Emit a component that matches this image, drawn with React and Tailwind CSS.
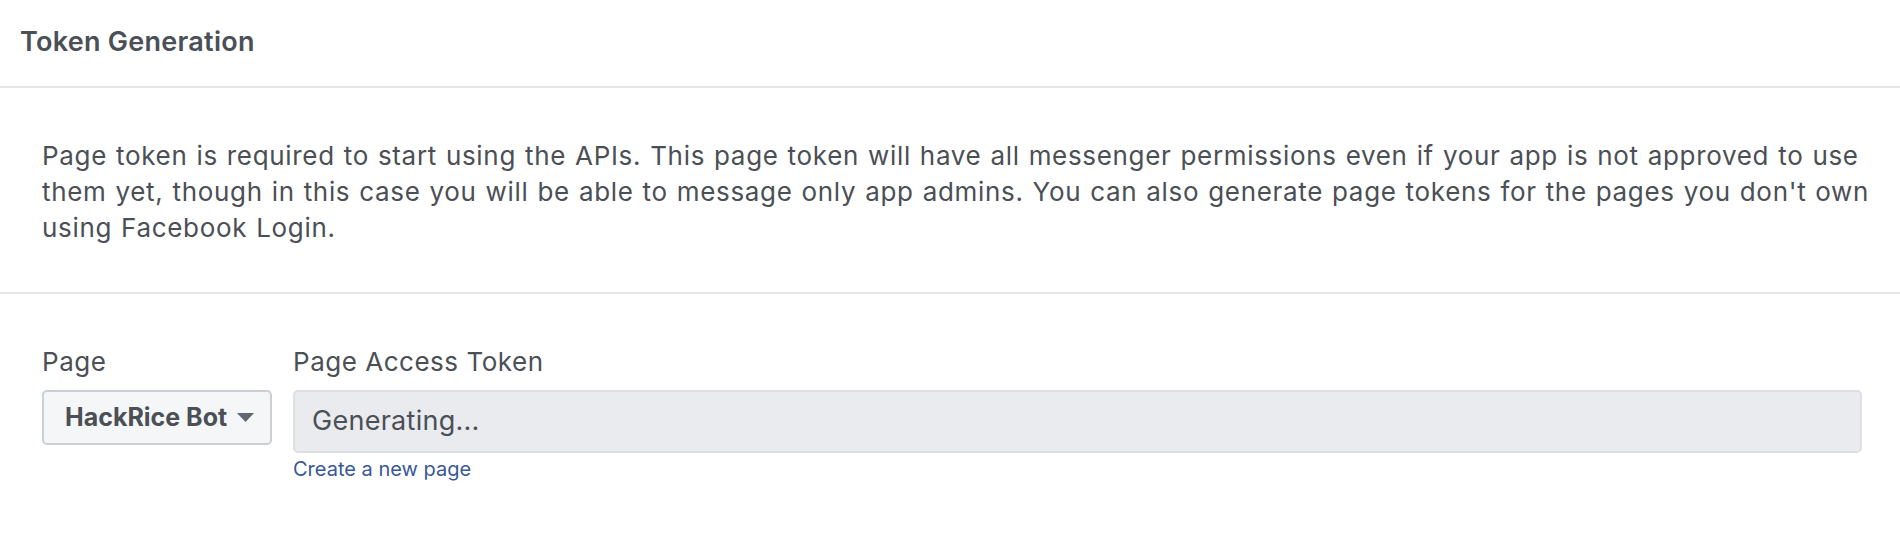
import React from 'react';

const font = { fontFamily: 'Inter, "Noto Sans", Roboto, sans-serif' };

function Caret() {
  return (
    <svg width="17" height="9" viewBox="0 0 17 9" className="shrink-0">
      <path d="M0 0 L17 0 L8.5 9 Z" fill="#606770" />
    </svg>
  );
}

export default function App() {
  return (
    <div className="h-[544px] w-full bg-white text-[#4b4f56]" style={font}>
      {/* header */}
      <div className="flex h-[88px] items-center border-b-2 border-[#e5e5e5] pb-[4px] pl-[20px]">
        <h2 className="text-[27px] font-semibold leading-none tracking-[0.01em]">Token Generation</h2>
      </div>

      {/* description */}
      <div className="border-b-2 border-[#e5e5e5] pb-[46px] pl-[42px] pr-[20px] pt-[50px]">
        <p className="text-[26px] leading-[36px] tracking-[0.026em] [word-spacing:1px]">
          Page token is required to start using the APIs. This page token will have all messenger
          permissions even if your app is not approved to use them yet, though in this case you will be
          able to message only app admins. You can also generate page tokens for the pages you don't
          own using Facebook Login.
        </p>
      </div>

      {/* token form */}
      <div className="flex gap-[21px] pl-[42px] pr-[38px] pt-[50px]">
        <div className="flex flex-col">
          <label className="text-[26px] leading-[36px] tracking-[0.02em]">Page</label>
          <button className="mt-[10px] flex h-[55px] w-[230px] items-center gap-[10px] rounded-[5px] border-2 border-[#ccd0d5] bg-[#f5f6f7] pl-[21px] text-[25px] font-bold text-[#4b4f56]">
            HackRice Bot
            <Caret />
          </button>
        </div>
        <div className="flex flex-1 flex-col">
          <label className="text-[26px] leading-[36px] tracking-[0.02em]">Page Access Token</label>
          <div className="mt-[10px] flex h-[63px] items-center rounded-[5px] border-2 border-[#dddfe2] bg-[#e9ebee] pl-[17px] text-[27px] tracking-[0.01em]">
            Generating...
          </div>
          <a href="#" className="mt-[4px] text-[20px] leading-[24px] text-[#385898]">
            Create a new page
          </a>
        </div>
      </div>
    </div>
  );
}
